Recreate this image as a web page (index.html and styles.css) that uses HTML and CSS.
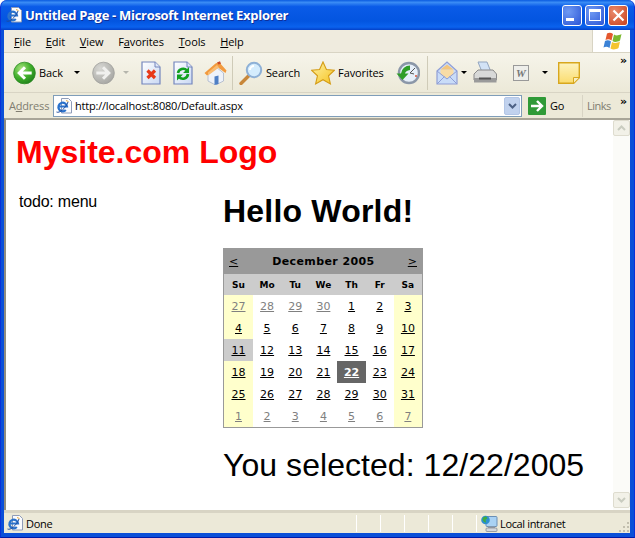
FILE: index.html
```html
<!DOCTYPE html>
<html lang="en">
<head>
    <meta charset="UTF-8">
    <title>Untitled Page - Microsoft Internet Explorer</title>
    <link rel="stylesheet" href="styles.css">
</head>
<body>
    <svg class="defs" width="0" height="0">
        <defs>
            <radialGradient id="green-ball" cx=".35" cy=".3" r=".8">
                <stop offset="0" stop-color="#a6e27c"/>
                <stop offset=".55" stop-color="#3fae2a"/>
                <stop offset="1" stop-color="#1c7a1a"/>
            </radialGradient>
            <radialGradient id="gray-ball" cx=".35" cy=".3" r=".8">
                <stop offset="0" stop-color="#d8d8d4"/>
                <stop offset="1" stop-color="#a4a4a0"/>
            </radialGradient>
            <linearGradient id="page-fill" x1="0" y1="0" x2="1" y2="1">
                <stop offset="0" stop-color="#ffffff"/>
                <stop offset="1" stop-color="#c9d8f3"/>
            </linearGradient>
            <linearGradient id="star-fill" x1="0" y1="0" x2="1" y2="1">
                <stop offset="0" stop-color="#fff3a8"/>
                <stop offset="1" stop-color="#f5c21f"/>
            </linearGradient>
            <linearGradient id="note-fill" x1="0" y1="0" x2="0" y2="1">
                <stop offset="0" stop-color="#fdf3c0"/>
                <stop offset="1" stop-color="#fbdc6e"/>
            </linearGradient>
            <symbol id="ie-page" viewBox="0 0 16 16">
                <path d="M5.500.5h7l3 3v11.500h-10z" fill="#fafbfe" stroke="#8f9cb8"/>
                <path d="M3 8.500h8A4.300 4.300 0 1 0 9.800 12" fill="none" stroke="#2a72cc" stroke-width="2.200"/>
                <path d="M.5 14c3 1.500 9-3.500 11.500-10" fill="none" stroke="#1f4c9c" stroke-width="1"/>
                <path d="M10 2.500l2.500 1" stroke="#e5a93c"/>
            </symbol>
        </defs>
    </svg>

    <div class="window">
        <div class="titlebar">
            <svg class="title-icon"><use href="#ie-page"/></svg>
            <span class="title-text">Untitled Page - Microsoft Internet Explorer</span>
            <div class="win-buttons">
                <div class="win-btn"><span class="min-glyph"></span></div>
                <div class="win-btn"><span class="max-glyph"></span></div>
                <div class="win-btn close">
                    <svg width="13" height="13" viewBox="0 0 13 13"><path d="M1.500 1.500l10 10M11.500 1.500l-10 10" stroke="#fff" stroke-width="2.200"/></svg>
                </div>
            </div>
        </div>

        <div class="menubar">
            <div class="menu-items">
                <span><u>F</u>ile</span>
                <span><u>E</u>dit</span>
                <span><u>V</u>iew</span>
                <span>F<u>a</u>vorites</span>
                <span><u>T</u>ools</span>
                <span><u>H</u>elp</span>
            </div>
            <div class="flag">
                <svg width="22" height="19" viewBox="0 0 22 19">
                    <path d="M6 1.500c2-1 4-1 6 .5l-1.500 6.500c-2-1.500-4-1.500-6-.5z" fill="#e4572e"/>
                    <path d="M13 2.500c2 1.300 4 1.300 7.500-.5L19 8.500c-3 1.800-5.500 1.800-7.500.5z" fill="#7cb82f"/>
                    <path d="M4 9c2-1 4-1 6 .5L8.500 16c-2-1.500-4-1.500-6-.5z" fill="#3b82d6"/>
                    <path d="M11 10c2 1.300 5 1.300 8-.5L17.500 16c-3 1.800-6 1.800-8 .5z" fill="#f4c430"/>
                </svg>
            </div>
        </div>

        <div class="toolbar">
            <svg class="round-btn" viewBox="0 0 24 24">
                <circle cx="12" cy="12" r="11.300" fill="url(#green-ball)" stroke="#2b8a22" stroke-width=".8"/>
                <path d="M19.500 12H8M12.500 6L6.500 12l6 6" fill="none" stroke="#fff" stroke-width="3.200"/>
            </svg>
            <span class="tool-label">Back</span>
            <span class="caret back-caret"></span>
            <svg class="round-btn forward" viewBox="0 0 24 24">
                <circle cx="12" cy="12" r="11.300" fill="url(#gray-ball)" stroke="#a0a09c" stroke-width=".8"/>
                <path d="M4.500 12H16M11.500 6l6 6-6 6" fill="none" stroke="#f0f0ee" stroke-width="3.200"/>
            </svg>
            <span class="caret off"></span>
            <svg class="tool-icon stop" viewBox="0 0 20 24">
                <path d="M1 1h13l5 5v17H1z" fill="url(#page-fill)" stroke="#7486bd" stroke-width="1.200"/>
                <path d="M14 1v5h5" fill="#dfe7f7" stroke="#7486bd"/>
                <path d="M6.500 9.500l7.500 7.500M14 9.500L6.500 17" stroke="#e8391a" stroke-width="3.200"/>
            </svg>
            <svg class="tool-icon refresh" viewBox="0 0 20 24">
                <path d="M1 1h13l5 5v17H1z" fill="url(#page-fill)" stroke="#7486bd" stroke-width="1.200"/>
                <path d="M14 1v5h5" fill="#dfe7f7" stroke="#7486bd"/>
                <path d="M5 12a5.200 5.200 0 0 1 9-2.500M15 13a5.200 5.200 0 0 1-9 3" fill="none" stroke="#12a020" stroke-width="2.600"/>
                <path d="M16 6v6h-6zM4 19.500v-6h6z" fill="#12a020"/>
            </svg>
            <svg class="tool-icon home" viewBox="0 0 23 24">
                <path d="M4 12v8l7.500 4 8-4v-8L12 6z" fill="#eef2f9" stroke="#a9b5ca" stroke-width=".8"/>
                <path d="M.5 12L11.500 2.500 15 1l7.500 8.500-1 2.500L14 6.500 3 14.500z" fill="#f29a3e"/>
                <path d="M13 1.500l3-1.200 1 2.500-2.500.8z" fill="#c84a2a"/>
                <path d="M4 11.500L13 4l2 2.500-11 8z" fill="#f9bc72"/>
                <path d="M10.500 15.500l4-1v8.500l-4 1z" fill="#4f7fc4"/>
            </svg>
            <span class="sep"></span>
            <svg class="tool-icon search" viewBox="0 0 24 24">
                <path d="M10 14.500L2 22.500" stroke="#c8873a" stroke-width="3.400" stroke-linecap="round"/>
                <circle cx="15" cy="9" r="7.200" fill="#d4ecfd" stroke="#8eb0d6" stroke-width="2"/>
                <path d="M11 9a4 4 0 0 1 4-4" fill="none" stroke="#fff" stroke-width="2"/>
            </svg>
            <span class="tool-label">Search</span>
            <svg class="tool-icon star" viewBox="0 0 26 26">
                <path d="M13 1l3.700 8.200 8.800.8-6.500 6 2 8.800L13 20.200 5 24.800l2-8.800-6.500-6 8.800-.8z" fill="url(#star-fill)" stroke="#d49c16" stroke-width="1.200"/>
            </svg>
            <span class="tool-label">Favorites</span>
            <svg class="tool-icon history" viewBox="0 0 24 24">
                <circle cx="13" cy="12" r="10" fill="#e6eff9" stroke="#8b97a8" stroke-width="2.400"/>
                <path d="M14 12l5-5M14 12l4 1" fill="none" stroke="#555"/>
                <circle cx="20" cy="15" r="1" fill="#d9533a"/>
                <path d="M.5 12.500H5A9 9 0 0 1 14 4.500v4.500c-3 .3-4.500 2-5 3.500h3.500L6.500 19z" fill="#2f9e28"/>
            </svg>
            <span class="sep second"></span>
            <svg class="tool-icon mail" viewBox="0 0 22 24">
                <path d="M1 10l10-9 10 9v13H1z" fill="#c9dcf8" stroke="#8f9ed6" stroke-width="1.200"/>
                <path d="M4.500 8.500h13v5l-6.500 4-6.500-4z" fill="#f9dca6"/>
                <path d="M4.500 8.500l6.500-5 6.500 5z" fill="#f3c67e"/>
                <path d="M1 10l10 8 10-8M1 23l7.500-7.500M21 23l-7.500-7.500" fill="none" stroke="#8f9ed6"/>
            </svg>
            <span class="caret mail-caret"></span>
            <svg class="tool-icon print" viewBox="0 0 24 24">
                <path d="M5 1h9l4 10H9z" fill="#d2e2f6" stroke="#93a5bf"/>
                <path d="M1 13l4-4h15l3.500 4v6H1z" fill="#d8d9d8" stroke="#8a8a8a"/>
                <path d="M1 17h22.500v4.500H1z" fill="#9a9a9a"/>
                <rect x="6" y="16.500" width="12" height="2" fill="#555"/>
            </svg>
            <div class="word-icon"><span class="word-w">W</span></div>
            <span class="caret word-caret"></span>
            <svg class="note-icon" viewBox="0 0 22 22">
                <path d="M.7.7h20.600v15l-5.600 5.600H.7z" fill="url(#note-fill)" stroke="#d8a71e" stroke-width="1.400"/>
                <path d="M15.500 21v-5.500H21" fill="#f7eec2" stroke="#d8a71e"/>
            </svg>
            <span class="chevron top-chevron">&raquo;</span>
        </div>

        <div class="addressbar">
            <span class="address-label">A<u>d</u>dress</span>
            <div class="address-field">
                <svg class="field-icon"><use href="#ie-page"/></svg>
                <span class="url">http://localhost:8080/Default.aspx</span>
                <div class="dropdown">
                    <svg width="9" height="6" viewBox="0 0 9 6"><path d="M1 1l3.500 3.500L8 1" fill="none" stroke="#4d6185" stroke-width="2"/></svg>
                </div>
            </div>
            <div class="go-btn">
                <svg width="18" height="18" viewBox="0 0 18 18">
                    <rect width="18" height="18" rx="1" fill="#2f9a37"/>
                    <path d="M3 9h10M9 4l5 5-5 5" fill="none" stroke="#fff" stroke-width="2.400"/>
                </svg>
                <span>Go</span>
            </div>
            <div class="links"><span class="links-text">Links</span><span class="chevron">&raquo;</span></div>
        </div>

        <div class="viewport">
            <div class="page">
                <div class="logo">Mysite.com Logo</div>
                <div class="columns">
                    <div class="side">todo: menu</div>
                    <div class="main">
                        <h1>Hello World!</h1>
                        <table class="cal">
                            <tr class="cal-title">
                                <td class="cal-prev"><a>&lt;</a></td>
                                <td colspan="5" class="cal-month">December 2005</td>
                                <td class="cal-next"><a>&gt;</a></td>
                            </tr>
                            <tr class="cal-days">
                                <th>Su</th><th>Mo</th><th>Tu</th><th>We</th><th>Th</th><th>Fr</th><th>Sa</th>
                            </tr>
                            <tr>
                                <td class="we other"><a>27</a></td><td class="other"><a>28</a></td><td class="other"><a>29</a></td><td class="other"><a>30</a></td><td><a>1</a></td><td><a>2</a></td><td class="we"><a>3</a></td>
                            </tr>
                            <tr>
                                <td class="we"><a>4</a></td><td><a>5</a></td><td><a>6</a></td><td><a>7</a></td><td><a>8</a></td><td><a>9</a></td><td class="we"><a>10</a></td>
                            </tr>
                            <tr>
                                <td class="today"><a>11</a></td><td><a>12</a></td><td><a>13</a></td><td><a>14</a></td><td><a>15</a></td><td><a>16</a></td><td class="we"><a>17</a></td>
                            </tr>
                            <tr>
                                <td class="we"><a>18</a></td><td><a>19</a></td><td><a>20</a></td><td><a>21</a></td><td class="sel"><a>22</a></td><td><a>23</a></td><td class="we"><a>24</a></td>
                            </tr>
                            <tr>
                                <td class="we"><a>25</a></td><td><a>26</a></td><td><a>27</a></td><td><a>28</a></td><td><a>29</a></td><td><a>30</a></td><td class="we"><a>31</a></td>
                            </tr>
                            <tr>
                                <td class="we other"><a>1</a></td><td class="other"><a>2</a></td><td class="other"><a>3</a></td><td class="other"><a>4</a></td><td class="other"><a>5</a></td><td class="other"><a>6</a></td><td class="we other"><a>7</a></td>
                            </tr>
                        </table>
                        <div class="selected">You selected: 12/22/2005</div>
                    </div>
                </div>
            </div>
            <div class="scrollbar">
                <div class="scroll-btn"><svg width="9" height="6" viewBox="0 0 9 6"><path d="M1 5l3.500-3.500L8 5" fill="none" stroke="#c9ccc0" stroke-width="2"/></svg></div>
                <div class="scroll-btn"><svg width="9" height="6" viewBox="0 0 9 6"><path d="M1 1l3.500 3.500L8 1" fill="none" stroke="#c9ccc0" stroke-width="2"/></svg></div>
            </div>
        </div>

        <div class="statusbar">
            <svg class="status-icon"><use href="#ie-page"/></svg>
            <span class="status-text">Done</span>
            <div class="status-cells">
                <span></span><span></span><span></span><span></span><span></span>
            </div>
            <div class="zone">
                <svg width="17" height="17" viewBox="0 0 17 17">
                    <rect x="5" y="1.500" width="11" height="10" rx="1" fill="#a9d2f4" stroke="#6a8fb5"/>
                    <path d="M7 11.500h7v2H7z" fill="#9aa0a8"/>
                    <rect x="5" y="13" width="11" height="3.500" rx="1" fill="#d4d7dc" stroke="#7d828a" stroke-width=".7"/>
                    <circle cx="4.500" cy="5" r="4.300" fill="#2d8fd0"/>
                    <path d="M2 2.500l3-1.300 1.500 2-2 1.500.5 3-2-1-1.500-2z" fill="#3fae3c"/>
                </svg>
                <span class="zone-text">Local intranet</span>
            </div>
            <svg class="grip" width="12" height="12" viewBox="0 0 12 12">
                <path d="M9 1h2v2H9zM5 5h2v2H5zM9 5h2v2H9zM1 9h2v2H1zM5 9h2v2H5zM9 9h2v2H9z" fill="#c2bfae"/>
            </svg>
        </div>
    </div>
</body>
</html>
```

FILE: styles.css
```css
* {
    margin: 0;
    padding: 0;
    box-sizing: border-box;
}

body {
    width: 635px;
    height: 538px;
    overflow: hidden;
    background: #fff;
    font-family: 'DejaVu Sans', sans-serif;
    font-size: 11px;
    color: #000;
}

.defs {
    position: absolute;
}

.window {
    width: 635px;
    height: 538px;
    display: flex;
    flex-direction: column;
    padding: 0 4px 4px 3px;
    background: #0a4fd8;
    border-radius: 7px 7px 0 0;
    border-left: 1px solid #0831d9;
    border-right: 1px solid #0831d9;
    border-bottom: 1px solid #0019a8;
}

/* title bar */
.titlebar {
    height: 30px;
    flex: none;
    display: flex;
    align-items: center;
    margin: 0 -4px 0 -3px;
    padding: 0 6px 0 5px;
    background: linear-gradient(180deg, #0a5be0 0%, #3a8cf5 8%, #0a5be8 22%, #0355e0 70%, #0a62ee 90%, #0340c8 100%);
    border-radius: 7px 7px 0 0;
}

.title-icon {
    width: 16px;
    height: 16px;
    margin-right: 3px;
}

.title-text {
    flex: 1;
    color: #fff;
    font-family: 'Open Sans', sans-serif;
    font-weight: 700;
    font-size: 13px;
    letter-spacing: -0.3px;
    text-shadow: 1px 1px 0 #0f2f9a;
}

.win-buttons {
    display: flex;
    gap: 3px;
}

.win-btn {
    width: 20px;
    height: 21px;
    display: flex;
    align-items: center;
    justify-content: center;
    border: 1px solid #fff;
    border-radius: 3px;
    background: radial-gradient(circle at 30% 30%, #6f9af3, #2b55d6);
}

.win-btn.close {
    background: radial-gradient(circle at 30% 30%, #ea8a6c, #c8401c);
}

.min-glyph {
    width: 8px;
    height: 3px;
    background: #fff;
    align-self: flex-end;
    margin: 0 5px 4px 0;
}

.max-glyph {
    width: 12px;
    height: 12px;
    border: 1px solid #fff;
    border-top-width: 3px;
}

/* menu bar */
.menubar {
    height: 23px;
    flex: none;
    display: flex;
    background: #efebde;
    border-bottom: 1px solid #d8d4c4;
}

.menu-items {
    flex: 1;
    display: flex;
    align-items: center;
    gap: 14.8px;
    padding-left: 10px;
    font-family: 'Open Sans', sans-serif;
    font-size: 11px;
    letter-spacing: -0.1px;
}

.flag {
    width: 38px;
    background: #fff;
    border-left: 1px solid #d8d4c4;
    display: flex;
    align-items: center;
    justify-content: center;
}

/* toolbar */
.toolbar {
    height: 40px;
    flex: none;
    display: flex;
    align-items: center;
    position: relative;
    padding-left: 9px;
    background: linear-gradient(180deg, #f6f4ea, #ece9d8);
    border-bottom: 1px solid #d8d4c4;
    font-family: 'Open Sans', sans-serif;
    font-size: 11px;
    letter-spacing: -0.1px;
}

.round-btn {
    width: 23px;
    height: 24px;
    flex: none;
}

.tool-label {
    margin-left: 3px;
}

.caret {
    width: 0;
    height: 0;
    border: 3px solid transparent;
    border-top: 3px solid #000;
    border-bottom: 0;
}

.back-caret {
    margin-left: 11px;
}

.caret.off {
    margin-left: 8px;
    border-top-color: #b5b5ac;
}

.forward {
    margin-left: 12px;
}

.tool-icon {
    flex: none;
    width: 24px;
    height: 24px;
}

.stop {
    width: 20px;
    margin-left: 12px;
}

.refresh {
    width: 20px;
    margin-left: 12px;
}

.home {
    width: 23px;
    margin-left: 11px;
}

.sep {
    width: 1px;
    height: 34px;
    margin: 0 6px 0 5px;
    background: #cfcbb8;
    flex: none;
}

.star {
    margin-left: 11px;
}

.history {
    margin-left: 12px;
}

.sep.second {
    margin: 0 8px 0 7px;
}

.mail {
    width: 22px;
}

.mail-caret {
    margin-left: 3px;
}

.print {
    margin-left: 6px;
}

.word-icon {
    width: 16px;
    height: 16px;
    margin-left: 16px;
    display: flex;
    align-items: center;
    justify-content: center;
    flex: none;
    background: #eeeeea;
    border: 1px solid #999;
}

.word-w {
    font-family: 'Liberation Serif', serif;
    font-style: italic;
    font-weight: 700;
    font-size: 11px;
    color: #777;
}

.word-caret {
    margin-left: 13px;
}

.note-icon {
    width: 22px;
    height: 22px;
    margin-left: 10px;
    flex: none;
}

.chevron {
    font-family: 'DejaVu Sans', sans-serif;
    font-weight: 700;
    font-size: 11px;
    line-height: 10px;
}

.top-chevron {
    position: absolute;
    top: 3px;
    right: 3px;
}

/* address bar */
.addressbar {
    height: 25px;
    flex: none;
    display: flex;
    align-items: center;
    background: #ece9d8;
    font-family: 'Open Sans', sans-serif;
    font-size: 11px;
}

.address-label {
    width: 49px;
    padding-left: 5px;
    color: #807d70;
    letter-spacing: -0.2px;
}

.address-field {
    flex: 1;
    height: 22px;
    display: flex;
    align-items: center;
    background: #fff;
    border: 1px solid #7f9db9;
    padding-left: 2px;
}

.field-icon {
    width: 16px;
    height: 16px;
    margin-right: 3px;
}

.url {
    flex: 1;
    letter-spacing: -0.2px;
}

.dropdown {
    width: 16px;
    height: 18px;
    margin-right: 1px;
    display: flex;
    align-items: center;
    justify-content: center;
    background: #c1d2ee;
    border: 1px solid #b3c6e6;
    border-radius: 2px;
}

.go-btn {
    display: flex;
    align-items: center;
    gap: 4px;
    width: 60px;
    padding-left: 6px;
    letter-spacing: -0.3px;
}

.links {
    width: 48px;
    height: 22px;
    display: flex;
    justify-content: space-between;
    align-items: center;
    padding: 0 3px 0 4px;
    color: #807d70;
    border-left: 1px solid #d8d4c4;
}

.links-text {
    letter-spacing: -0.5px;
}

.links .chevron {
    color: #000;
    align-self: flex-start;
    margin-top: 2px;
}

/* page area */
.viewport {
    flex: 1;
    min-height: 0;
    display: flex;
    background: #fff;
    border-top: 2px solid #a8a598;
    border-left: 2px solid #8f8c80;
}

.page {
    flex: 1;
    padding: 14px 0 0 10px;
    font-family: 'Liberation Sans', sans-serif;
}

.logo {
    color: #f00;
    font-size: 32px;
    font-weight: 700;
    line-height: 37px;
}

.columns {
    display: flex;
    margin-top: 22px;
}

.side {
    width: 207px;
    padding-left: 3px;
    font-size: 16px;
    line-height: 18px;
    letter-spacing: -0.2px;
}

h1 {
    font-size: 32px;
    line-height: 37px;
    letter-spacing: 0.2px;
    margin-bottom: 18px;
}

.cal {
    width: 200px;
    height: 180px;
    table-layout: fixed;
    border-collapse: separate;
    border-spacing: 0;
    border: 1px solid #999;
    font-family: 'DejaVu Sans', sans-serif;
    font-size: 11px;
    text-align: center;
}

.cal td,
.cal th {
    padding: 0;
    height: 22px;
}

.cal a {
    color: #000;
    text-decoration: underline;
}

.cal-title {
    background: #999;
    font-weight: 700;
}

.cal-title td {
    height: 25px;
}

.cal-title .cal-prev {
    width: 29px;
    padding-left: 5px;
    text-align: left;
    font-weight: 400;
}

.cal-title .cal-next {
    padding-right: 5px;
    text-align: right;
    font-weight: 400;
}

.cal-month {
    letter-spacing: 0.4px;
}

.cal-days {
    background: #ccc;
    font-size: 9px;
}

.cal-days th {
    height: 21px;
}

.we {
    background: #ffc;
}

.other a {
    color: #808080;
}

.today {
    background: #ccc;
}

.sel {
    background: #666;
    font-weight: 700;
}

.sel a {
    color: #fff;
}

.selected {
    margin-top: 19px;
    font-size: 32px;
    line-height: 37px;
    letter-spacing: 0.05px;
}

/* scrollbar */
.scrollbar {
    width: 17px;
    flex: none;
    display: flex;
    flex-direction: column;
    justify-content: space-between;
    padding-bottom: 2px;
    background: #fbfbf8;
}

.scroll-btn {
    height: 16px;
    display: flex;
    align-items: center;
    justify-content: center;
    background: #f2f1e8;
    border: 1px solid #dedccf;
    border-radius: 2px;
}

/* status bar */
.statusbar {
    height: 23px;
    flex: none;
    display: flex;
    align-items: center;
    position: relative;
    background: #ece9d8;
    border-top: 3px solid #d8d4c4;
    font-family: 'Open Sans', sans-serif;
    font-size: 11px;
}

.status-icon {
    width: 16px;
    height: 16px;
    margin: 0 3px 0 3px;
}

.status-text {
    flex: 1;
    letter-spacing: -0.3px;
}

.status-cells {
    display: flex;
    height: 17px;
}

.status-cells span {
    width: 24px;
    border-left: 1px solid #fff;
}

.zone {
    width: 154px;
    height: 17px;
    display: flex;
    align-items: center;
    gap: 2px;
    padding-left: 4px;
    border-left: 1px solid #fff;
}

.zone-text {
    letter-spacing: -0.35px;
}

.grip {
    position: absolute;
    right: 0;
    bottom: 0;
}
```
